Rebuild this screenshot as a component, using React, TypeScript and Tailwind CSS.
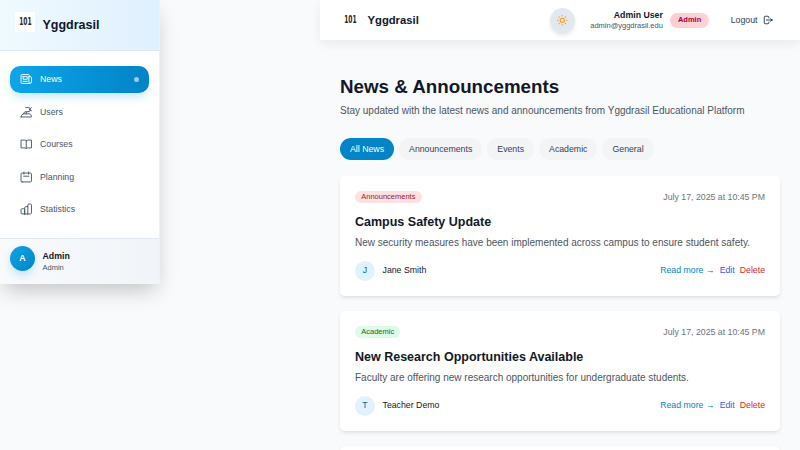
import React from "react";

type IconName = "news" | "users" | "book" | "calendar" | "chart";

function Icon({ name }: { name: IconName }) {
  return (
    <svg viewBox="0 0 24 24" className="size-[12.5px] shrink-0" fill="none" stroke="currentColor" strokeWidth={1.8} strokeLinecap="round" strokeLinejoin="round">
      {name === "news" && <path d="M18 20H4a2 2 0 01-2-2V5a2 2 0 012-2h12a2 2 0 012 2v2m0 13a2 2 0 01-1-2V7m1 13h1a3 3 0 003-3V9a2 2 0 00-2-2h-3M6 16h8M6 7h8v5H6V7z" />}
      {name === "users" && <path d="M2 21h20v-1c0-3-2-5-5-5H8c-3 0-6 2-6 6zM7 15c0-3 2-4 5-4h4M12 15v-4M11 3h5a4 4 0 010 8M18 7l4-4M18 7l4 2" />}
      {name === "book" && <path d="M12 5C10.800 4 9.200 4 7.500 4H2v15h5.500c1.700 0 3.300 0 4.500 1 1.200-1 2.800-1 4.500-1H22V4h-5.500c-1.700 0-3.300 0-4.500 1zm0 0v15" />}
      {name === "calendar" && <path d="M7.500 2v4m9-4v4M7 10h10M4 21h16a2 2 0 002-2V6a2 2 0 00-2-2H4a2 2 0 00-2 2v13a2 2 0 002 2z" />}
      {name === "chart" && <path d="M9 21v-8a2 2 0 00-2-2H4a2 2 0 00-2 2v6a2 2 0 002 2h5zm0 0h6m-6 0V9a2 2 0 012-2h4m0 14V4a2 2 0 012-2h3a2 2 0 012 2v15a2 2 0 01-2 2h-5z" />}
    </svg>
  );
}

function Logo() {
  return (
    <div className="flex size-5 shrink-0 items-center justify-center bg-white">
      <span className="origin-center scale-x-[0.6] font-['DejaVu_Sans',sans-serif] text-[10px] leading-none font-bold text-[#2a2a2a]">101</span>
    </div>
  );
}

const nav: { label: string; icon: IconName }[] = [
  { label: "News", icon: "news" },
  { label: "Users", icon: "users" },
  { label: "Courses", icon: "book" },
  { label: "Planning", icon: "calendar" },
  { label: "Statistics", icon: "chart" },
];

function Sidebar() {
  return (
    <aside className="relative z-10 flex h-[284px] w-40 shrink-0 flex-col border-r border-slate-200/60 bg-white shadow-[0_10px_20px_-4px_rgba(0,0,0,0.22)]">
      <div className="flex h-[51px] items-center gap-[7.5px] border-b border-slate-200 bg-linear-to-r from-sky-50 to-[#dff0fe] pl-[15px]">
        <div className="-mt-[7px]"><Logo /></div>
        <span className="text-[12.5px] font-bold text-slate-900">Yggdrasil</span>
      </div>
      <nav className="flex flex-1 flex-col gap-[5px] px-[10px] pt-[14.5px]">
        {nav.map((item, i) => (
          <div
            key={item.label}
            className={
              "flex h-[27.5px] items-center gap-[7.5px] rounded-[10px] pl-[10px] text-[8.75px] " +
              (i === 0
                ? "bg-linear-to-r from-[#0ea5e9] to-[#0284c7] text-white shadow-[0_6px_10px_-2px_rgba(14,165,233,0.25)]"
                : "text-slate-600")
            }
          >
            <Icon name={item.icon} />
            <span className="pt-px">{item.label}</span>
            {i === 0 && <span className="mr-[10px] ml-auto size-[5px] rounded-full bg-white/60" />}
          </div>
        ))}
      </nav>
      <div className="flex h-[46px] gap-[7.5px] border-t border-slate-200 bg-linear-to-r from-slate-50 to-slate-100 pt-[7px] pl-[10px]">
        <div className="flex size-[25px] items-center justify-center rounded-full bg-linear-to-br from-[#0ea5e9] to-[#0284c7] text-[8.75px] font-bold text-white shadow-[0_4px_8px_-1px_rgba(14,165,233,0.3)]">A</div>
        <div className="pt-[4px]">
          <div className="text-[8.75px] leading-[12.5px] font-bold text-slate-900">Admin</div>
          <div className="text-[7.5px] leading-[10px] text-slate-600">Admin</div>
        </div>
      </div>
    </aside>
  );
}

function Header() {
  return (
    <header className="flex h-10 items-center bg-white pr-[27.5px] pl-5 shadow-[0_4px_12px_-1px_rgba(15,23,42,0.08)]">
      <Logo />
      <span className="ml-[7.5px] text-[11.25px] font-bold text-slate-900">Yggdrasil</span>
      <div className="ml-auto flex size-[25px] items-center justify-center rounded-full bg-slate-200 text-amber-500 shadow-[0_3px_5px_-1px_rgba(0,0,0,0.12)]">
        <svg viewBox="0 0 24 24" className="size-[12.5px]" fill="none" stroke="currentColor" strokeWidth="2" strokeLinecap="round">
          <circle cx="12" cy="12" r="4" />
          <path d="M12 3v1m0 16v1m9-9h-1M4 12H3m15.4 6.4-.7-.7M6.300 6.300l-.7-.7m12.800 0-.7.7M6.300 17.700l-.7.7" />
        </svg>
      </div>
      <div className="ml-[15px] text-right">
        <div className="text-[8.75px] leading-[12.5px] font-bold text-slate-900">Admin User</div>
        <div className="text-[7.5px] leading-[10px] text-slate-600">admin@yggdrasil.edu</div>
      </div>
      <div className="ml-[7.5px] rounded-full bg-linear-to-r from-[#fecdd3] to-[#ffd2d6] px-[7.5px] py-[2.5px] text-[7.5px] leading-[10px] font-bold text-rose-800">Admin</div>
      <div className="ml-[22px] flex items-center gap-[5px] text-[8.75px] text-slate-700">
        <span className="pt-px">Logout</span>
        <svg viewBox="0 0 24 24" className="size-[10px]" fill="none" stroke="currentColor" strokeWidth="2.3" strokeLinecap="round" strokeLinejoin="round">
          <path d="M18 15l4-3m0 0l-4-3m4 3H8m6 5v2a2 2 0 01-2 2H5a2 2 0 01-2-2V5a2 2 0 012-2h7a2 2 0 012 2v2" />
        </svg>
      </div>
    </header>
  );
}

interface Post {
  tag: string;
  tagClass: string;
  title: string;
  body: string;
  author: string;
}

const posts: Post[] = [
  { tag: "Announcements", tagClass: "bg-[#fee2e2] text-[#991b1b]", title: "Campus Safety Update", body: "New security measures have been implemented across campus to ensure student safety.", author: "Jane Smith" },
  { tag: "Academic", tagClass: "bg-[#dcfce7] text-[#166534]", title: "New Research Opportunities Available", body: "Faculty are offering new research opportunities for undergraduate students.", author: "Teacher Demo" },
];

function Card({ post }: { post: Post }) {
  return (
    <article className="h-[120px] shrink-0 rounded-[5px] bg-white px-[15px] pt-[15px] shadow-[0_2px_4px_-1px_rgba(0,0,0,0.15)]">
      <div className="flex h-[12.5px] items-center justify-between">
        <span className={"rounded-full px-[6.25px] py-[1.25px] text-[7.5px] leading-[10px] " + post.tagClass}>{post.tag}</span>
        <span className="pt-px text-[8.75px] text-[#6b7280]">July 17, 2025 at 10:45 PM</span>
      </div>
      <h2 className="mt-[11px] text-[12.5px] leading-[17.5px] font-bold text-[#111827]">{post.title}</h2>
      <p className="mt-[3.5px] text-[10px] leading-[15px] text-[#4b5563]">{post.body}</p>
      <div className="mt-[10.5px] flex items-center text-[8.75px]">
        <div className="flex size-5 items-center justify-center rounded-full bg-[#e0f2fe] pt-px text-[#0369a1]">{post.author[0]}</div>
        <span className="ml-[7.5px] pt-px text-[#111827]">{post.author}</span>
        <div className="ml-auto flex gap-[5px] pt-px">
          <span className="text-[#0284c7]">Read more →</span>
          <span className="text-[#2563eb]">Edit</span>
          <span className="text-[#dc2626]">Delete</span>
        </div>
      </div>
    </article>
  );
}

export default function App() {
  return (
    <div className="flex h-[450px] w-[800px] items-start overflow-hidden bg-[#f9fafb] font-['Liberation_Sans',sans-serif]">
      <Sidebar />
      <div className="ml-40 w-[480px] shrink-0">
        <Header />
        <main className="px-5 pt-[36px]">
          <h1 className="text-[18.75px] leading-[22.5px] font-bold text-[#111827]">News &amp; Announcements</h1>
          <p className="mt-[4px] text-[10px] leading-[15px] text-[#4b5563]">Stay updated with the latest news and announcements from Yggdrasil Educational Platform</p>
          <div className="mt-5 flex gap-[5px]">
            {["All News", "Announcements", "Events", "Academic", "General"].map((label, i) => (
              <span key={label} className={"rounded-full px-[10px] py-[5px] text-[8.75px] leading-[12.5px] " + (i === 0 ? "bg-[#0284c7] text-white" : "bg-[#f3f4f6] text-[#374151]")}>{label}</span>
            ))}
          </div>
          <div className="mt-[15.5px] flex flex-col gap-[15px]">
            {posts.map((post) => <Card key={post.tag} post={post} />)}
            <div className="h-[120px] rounded-[5px] bg-white shadow-sm" />
          </div>
        </main>
      </div>
    </div>
  );
}
